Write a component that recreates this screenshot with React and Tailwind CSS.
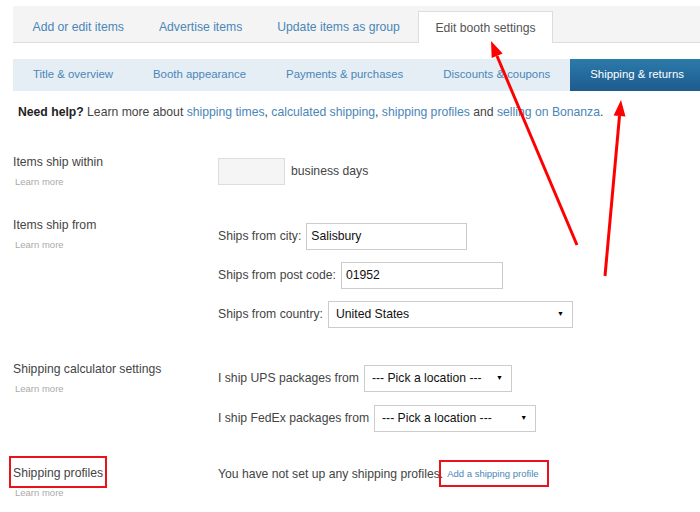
import React from 'react';

const link = 'text-[#4a86b8]';

function Label({ title, boxed }) {
    return (
        <div className="w-[205px] shrink-0">
            <div className="relative w-fit text-[12.2px] leading-4 text-[#444]">
                {title}
                {boxed && <span className="absolute -left-[4px] -right-[4px] -top-[9px] -bottom-[7px] border-2 border-[#e8141b]" />}
            </div>
            <div className="mt-[6px] ml-[2px] text-[9.5px] leading-3 text-[#aaa]">Learn more</div>
        </div>
    );
}

function Field({ label, w, value, select }) {
    return (
        <div className="flex items-center gap-[5px]">
            <span className="text-[12.2px] text-[#444]">{label}</span>
            <div className={'h-[27px] border border-[#ccc] bg-white flex items-center justify-between pr-[8px] text-[12.2px] text-[#111] ' + (select ? 'pl-[7px] ' : 'pl-[4px] ') + w}>
                <span>{value}</span>
                {select && <span className="text-[7px] text-black">▼</span>}
            </div>
        </div>
    );
}

export default function App() {
    return (
        <div className="relative w-[700px] h-[512px] overflow-hidden bg-white" style={{ fontFamily: '"Liberation Sans", Arial, sans-serif' }}>
            {/* top tabs */}
            <div className="mt-[6px] ml-[13px] h-[37px] bg-[#f4f4f4] border-b border-[#ddd] flex items-end pl-[2px] text-[12.2px]">
                <div className={'px-[17.5px] h-[31px] pt-[2px] flex items-center ' + link}>Add or edit items</div>
                <div className={'px-[17.5px] h-[31px] pt-[2px] flex items-center ' + link}>Advertise items</div>
                <div className={'px-[17.5px] h-[31px] pt-[2px] flex items-center ' + link}>Update items as group</div>
                <div className="ml-[1px] px-[16px] h-[32px] pt-[1px] -mb-px flex items-center bg-white border border-b-0 border-[#ddd] text-[#555]">Edit booth settings</div>
            </div>

            {/* sub tabs */}
            <div className="mt-[16px] ml-[13px] h-[32px] bg-[#e5eef5] flex text-[11.4px]">
                <div className={'px-[20px] flex items-center ' + link}>Title &amp; overview</div>
                <div className={'px-[20px] flex items-center ' + link}>Booth appearance</div>
                <div className={'px-[20px] flex items-center ' + link}>Payments &amp; purchases</div>
                <div className={'px-[20px] flex items-center ' + link}>Discounts &amp; coupons</div>
                <div className="flex-1 pl-[20px] flex items-center text-white bg-gradient-to-b from-[#2b7bab] to-[#1f5a8d]">Shipping &amp; returns</div>
            </div>

            {/* help */}
            <p className="mt-[13px] ml-[18px] text-[12.2px] leading-4 text-[#444]">
                <b className="text-[#222]">Need help?</b> Learn more about <span className={link}>shipping times</span>, <span className={link}>calculated shipping</span>, <span className={link}>shipping profiles</span> and <span className={link}>selling on Bonanza</span>.
            </p>

            <div className="ml-[13px]">
                {/* ship within */}
                <div className="flex mt-[34px]">
                    <Label title="Items ship within" />
                    <div className="flex items-center gap-[6px] mt-[4px] self-start">
                        <div className="w-[67px] h-[27px] border border-[#ddd] bg-[#f5f5f5]" />
                        <span className="text-[12.2px] text-[#444]">business days</span>
                    </div>
                </div>

                {/* ship from */}
                <div className="flex mt-[29px]">
                    <Label title="Items ship from" />
                    <div className="flex flex-col gap-[12px] mt-[6px]">
                        <Field label="Ships from city:" w="w-[161px]" value="Salisbury" />
                        <Field label="Ships from post code:" w="w-[162px]" value="01952" />
                        <Field label="Ships from country:" w="w-[245px]" value="United States" select />
                    </div>
                </div>

                {/* calculator */}
                <div className="flex mt-[33px]">
                    <Label title="Shipping calculator settings" />
                    <div className="flex flex-col gap-[13px] mt-[4px]">
                        <Field label="I ship UPS packages from" w="w-[148px]" value="--- Pick a location ---" select />
                        <Field label="I ship FedEx packages from" w="w-[162px]" value="--- Pick a location ---" select />
                    </div>
                </div>

                {/* profiles */}
                <div className="flex mt-[33px]">
                    <Label title="Shipping profiles" boxed />
                    <div className="flex items-center h-[18px] text-[12.2px] text-[#444] self-start">
                        <span>You have not set up any shipping profiles.</span>
                        <span className="relative ml-[4px] leading-3 text-[9.5px] text-[#4a86b8]">
                            Add a shipping profile
                            <span className="absolute -left-[8px] -right-[10px] -top-[8px] -bottom-[7px] border-2 border-[#e8141b]" />
                        </span>
                    </div>
                </div>
            </div>

            {/* annotation arrows */}
            <svg className="absolute inset-0 pointer-events-none" width="700" height="512">
                <line x1="577" y1="245" x2="497" y2="56" stroke="#f00" strokeWidth="3" />
                <polygon points="491,41 502.7,53.4 491.7,58" fill="#f00" />
                <line x1="605" y1="276" x2="619.5" y2="116" stroke="#f00" strokeWidth="3" />
                <polygon points="621,100 625.5,116.4 613.6,115.4" fill="#f00" />
            </svg>
        </div>
    );
}
